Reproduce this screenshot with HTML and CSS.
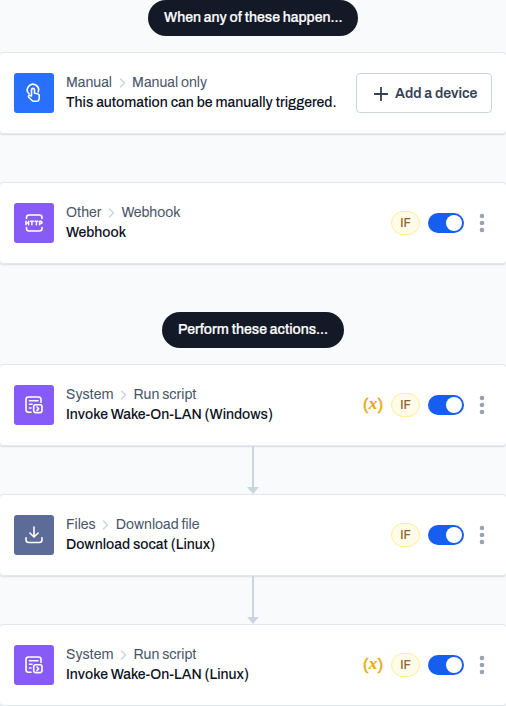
FILE: index.html
```
<!DOCTYPE html>
<html lang="en">
<head>
<meta charset="utf-8">
<title>Automation</title>
<link rel="stylesheet" href="styles.css">
</head>
<body>
<svg class="defs" aria-hidden="true">
  <symbol id="chevron" viewBox="0 0 7 10"><path d="M1.500 1 5.500 5 1.500 9"/></symbol>
  <symbol id="script" viewBox="0 0 20 20"><path d="M7 17.2H4.500Q2 17.200 2 14.800V4.500Q2 2 4.500 2H14.500Q17 2 17 4.500V7.500M5.500 5.700H14M5.500 9.300H8M5.500 13H7"/><rect x="9.700" y="9.800" width="8.300" height="7.800" rx="2"/><path d="m13 12 1.700 1.700L13 15.400"/></symbol>
  <symbol id="dots" viewBox="0 0 6 20"><circle cx="3" cy="3" r="2.300"/><circle cx="3" cy="10" r="2.300"/><circle cx="3" cy="17" r="2.300"/></symbol>
</svg>
<main class="flow">
  <div class="pill pill-when"><span>When any of these happen...</span></div>
  <section class="card first">
    <div class="icon blue"><svg viewBox="0 0 20 20"><path d="M4.900 10.700A5.600 5.600 0 1 1 14.200 8.800M7.500 13V6.900a1.500 1.500 0 0 1 3 0V10.200l3 .5q1.900.4 1.800 2.300l-.2 3q-.2 2.300-2.300 2.300H10q-1.200 0-2-.8l-3.200-3.300q-.8-.9 0-1.600.8-.6 1.600.1L7.500 13"/></svg></div>
    <div class="info">
      <div class="crumbs"><span>Manual</span><svg><use href="#chevron"/></svg><span>Manual only</span></div>
      <div class="name">This automation can be manually triggered.</div>
    </div>
    <button class="add"><svg viewBox="0 0 14 14"><path d="M7 .5v13M.5 7h13"/></svg><span>Add a device</span></button>
  </section>
  <section class="card second">
    <div class="icon purple"><svg viewBox="0 0 20 20"><path d="M2.500 5.500V4.500Q2.500 2 5 2h10.500Q18 2 18 4.500V5.500M2.500 14.500v1Q2.500 18 5 18h10.500q2.500 0 2.500-2.500V14.500"/><path class="http" d="M2 8.200v3.600M4.600 8.200v3.600M2 10h2.600M6.500 8.300h2.800M7.900 8.300V11.800M11 8.300h2.800M12.400 8.300V11.800M15.600 11.800V8.300h1.200q1.200 0 1.200 1.100t-1.200 1.100h-1.200"/></svg></div>
    <div class="info">
      <div class="crumbs"><span>Other</span><svg><use href="#chevron"/></svg><span>Webhook</span></div>
      <div class="name">Webhook</div>
    </div>
    <div class="controls"><span class="if">IF</span><span class="toggle"></span><svg class="dots"><use href="#dots"/></svg></div>
  </section>
  <div class="pill pill-perform"><span>Perform these actions...</span></div>
  <section class="card">
    <div class="icon purple"><svg><use href="#script"/></svg></div>
    <div class="info">
      <div class="crumbs"><span>System</span><svg><use href="#chevron"/></svg><span>Run script</span></div>
      <div class="name">Invoke Wake-On-LAN (Windows)</div>
    </div>
    <div class="controls"><span class="var">(<i>x</i>)</span><span class="if">IF</span><span class="toggle"></span><svg class="dots"><use href="#dots"/></svg></div>
  </section>
  <div class="arrow"></div>
  <section class="card">
    <div class="icon slate"><svg viewBox="0 0 20 20"><path d="M10 2v9.800M5.900 8l4.100 4 4.100-4M2 12.800v2Q2 17.500 4.700 17.500h10.600q2.700 0 2.700-2.700v-2"/></svg></div>
    <div class="info">
      <div class="crumbs"><span>Files</span><svg><use href="#chevron"/></svg><span>Download file</span></div>
      <div class="name">Download socat (Linux)</div>
    </div>
    <div class="controls"><span class="if">IF</span><span class="toggle"></span><svg class="dots"><use href="#dots"/></svg></div>
  </section>
  <div class="arrow"></div>
  <section class="card">
    <div class="icon purple"><svg><use href="#script"/></svg></div>
    <div class="info">
      <div class="crumbs"><span>System</span><svg><use href="#chevron"/></svg><span>Run script</span></div>
      <div class="name">Invoke Wake-On-LAN (Linux)</div>
    </div>
    <div class="controls"><span class="var">(<i>x</i>)</span><span class="if">IF</span><span class="toggle"></span><svg class="dots"><use href="#dots"/></svg></div>
  </section>
</main>
</body>
</html>
```
FILE: styles.css
```
* { box-sizing: border-box; }
body {
  margin: 0;
  height: 706px;
  overflow: hidden;
  background: #f8fafc;
  font: 14px/20px Archivo, "Liberation Sans", Arial, sans-serif;
  color: #0f172a;
}
svg { display: block; fill: none; stroke: currentColor; stroke-linecap: round; stroke-linejoin: round; }
.defs { position: absolute; width: 0; height: 0; }
.flow { display: flex; flex-direction: column; }
.pill {
  align-self: center;
  height: 36px;
  padding: 8px 0 0 16px;
  line-height: 19px;
  border-radius: 18px;
  background: #141927;
  color: #fff;
  white-space: nowrap;
  font-weight: 500;
  -webkit-text-stroke: .2px;
}
.pill-when { width: 210px; }
.pill-perform { width: 182px; margin: 48px 0 16px; }
.card {
  height: 82px;
  margin: 0 -1px;
  padding: 0 14px;
  display: flex;
  align-items: center;
  background: #fff;
  border: 1px solid #e2e8f0;
  border-radius: 4px;
  box-shadow: 0 1px 2px rgba(15, 23, 42, .12);
}
.first { margin-top: 16px; }
.second { margin-top: 48px; }
.icon {
  flex: none;
  width: 40px;
  height: 40px;
  display: grid;
  place-items: center;
  border-radius: 3px;
  color: #fff;
}
.icon svg { width: 20px; height: 20px; stroke-width: 1.6; }
.http { stroke-width: 1.5; }
.blue { background: #2970ff; }
.purple { background: #875bf7; }
.slate { background: #5d6b98; }
.info { flex: 1; margin-left: 12px; white-space: nowrap; }
.crumbs { display: flex; align-items: center; color: #475467; }
.crumbs svg { width: 7px; height: 10px; margin: 0 6.5px; color: #cbd5e1; stroke-width: 1.5; }
.name { color: #0c111d; font-weight: 500; }
.add {
  width: 136px;
  height: 40px;
  padding: 1px 0 0 17px;
  display: flex;
  align-items: center;
  gap: 7px;
  border: 1px solid #cbd5e1;
  border-radius: 4px;
  background: #fff;
  color: #344054;
  font: 600 14px/20px Archivo, "Liberation Sans", Arial, sans-serif;
  white-space: nowrap;
}
.add svg { width: 14px; height: 14px; stroke-width: 1.8; }
.add span { padding-top: 1px; }
.controls { display: flex; align-items: center; }
.var {
  margin-right: 8px;
  width: 20px;
  display: flex;
  justify-content: space-between;
  color: #eaaa08;
  font: 16px/20px "Liberation Sans", sans-serif;
  -webkit-text-stroke: .5px;
}
.var i { font: italic bold 17px/18px "Liberation Serif", serif; -webkit-text-stroke: .2px; }
.if {
  width: 29px;
  height: 24px;
  border: 1px solid #feee95;
  border-radius: 12px;
  background: #fefbe8;
  color: #8f6130;
  font-size: 12px;
  font-weight: 500;
  line-height: 22px;
  text-align: center;
}
.toggle {
  width: 36px;
  height: 20px;
  margin: 0 15px 0 8px;
  padding: 2px;
  border-radius: 10px;
  background: #155eef;
}
.toggle::after { content: ""; display: block; width: 16px; height: 16px; margin-left: auto; border-radius: 50%; background: #fff; }
.dots { width: 6px; height: 20px; margin-right: 7px; fill: #98a2b3; stroke: none; }
.arrow {
  height: 48px;
  display: flex;
  flex-direction: column;
  align-items: center;
}
.arrow::before { content: ""; width: 2px; height: 41px; background: #cbd5e1; }
.arrow::after { content: ""; border: 6px solid transparent; border-top: 7px solid #cbd5e1; border-bottom: 0; }
```
